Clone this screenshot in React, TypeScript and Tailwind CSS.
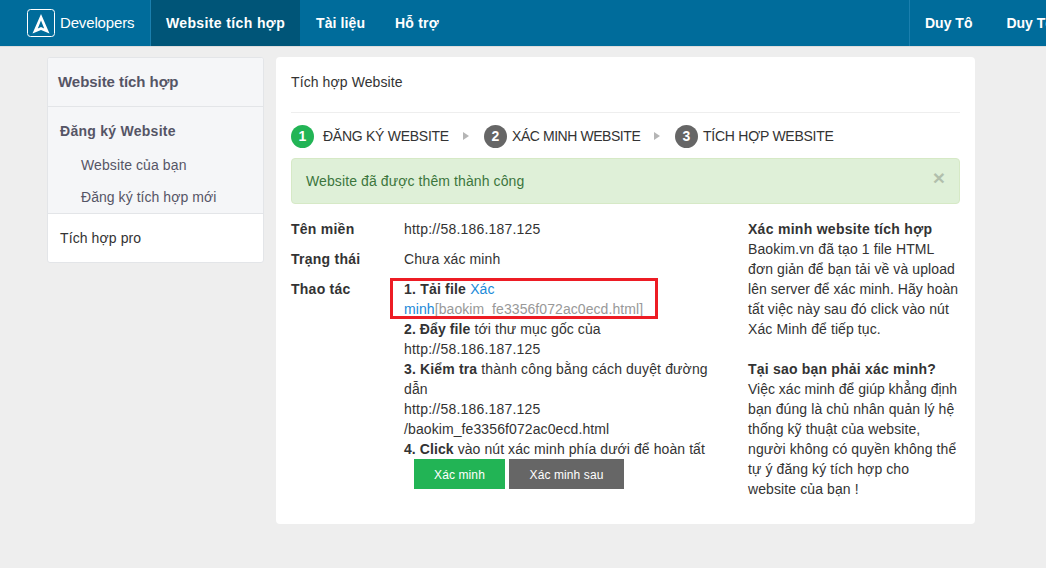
export default function App() {
  return (
    <div className="h-[568px] w-full overflow-hidden bg-[#eeeeee] font-['Liberation_Sans',Arial,sans-serif] text-[14px] leading-[20px] tracking-[0.1px] text-[#333333]">
      {/* Top nav */}
      <header className="flex h-[47px] overflow-hidden border-b border-[#dddddd] bg-[#006c9b] text-white">
        <div className="flex w-[909px] shrink-0">
          <div className="flex w-[151px] items-center border-r border-[#1a7fae] pl-[27px]">
            <svg width="28" height="28" viewBox="0 0 28 28" fill="none" aria-hidden="true">
              <rect x="0.5" y="0.5" width="27" height="27" rx="3" stroke="#fff" />
              <path d="M14 5 L22.5 24.5 L14 21 L5.5 24.5 Z M14 11.5 L10.8 19.5 L14 18 L17.2 19.5 Z" fill="#fff" fillRule="evenodd" />
            </svg>
            <span className="ml-[5px] text-[15px] tracking-[-0.15px]">Developers</span>
          </div>
          <a className="flex h-[46px] w-[149px] items-center justify-center bg-[#005578] font-bold tracking-[0.38px]">Website tích hợp</a>
          <a className="ml-[16px] flex h-[46px] items-center font-bold">Tài liệu</a>
          <a className="ml-[30px] flex h-[46px] items-center font-bold tracking-[0.2px]">Hỗ trợ</a>
        </div>
        <div className="flex shrink-0 border-l border-[#1a7fae]">
          <a className="ml-[15px] flex h-[46px] items-center font-bold tracking-normal whitespace-nowrap">Duy Tô</a>
          <a className="ml-[34px] flex h-[46px] items-center font-bold tracking-normal whitespace-nowrap">Duy Tô</a>
        </div>
      </header>

      <div className="ml-[47px] mt-[10px] flex items-start gap-[12px]">
        {/* Sidebar */}
        <aside className="w-[217px] overflow-hidden rounded-[3px] border border-[#e3e5e8] bg-white text-[#555566]">
          <div className="h-[49px] border-b border-[#e3e5e8] bg-[#f5f6f8] pl-[10px] pt-[14px] text-[15px] font-bold leading-[20px] tracking-[-0.05px]">Website tích hợp</div>
          <div className="h-[106px] bg-[#f5f6f8] pl-[12px] pt-[14px]">
            <div className="font-bold tracking-[0.27px]">Đăng ký Website</div>
            <div className="ml-[21px] mt-[14px]">Website của bạn</div>
            <div className="ml-[21px] mt-[12px] tracking-[0.05px]">Đăng ký tích hợp mới</div>
          </div>
          <div className="h-[49px] border-t border-[#e3e5e8] pl-[12px] pt-[14px] text-[#333333]">Tích hợp pro</div>
        </aside>

        {/* Main panel */}
        <main className="relative h-[467px] w-[699px] rounded-[4px] bg-white px-[15px]">
          <div className="h-[56px] border-b border-[#eeeeee] pt-[15px]">Tích hợp Website</div>

          <div className="mt-[12px] flex h-[22px] items-center">
            <span className="flex h-[23px] w-[23px] items-center justify-center rounded-full bg-[#22b455] font-bold text-white">1</span>
            <span className="ml-[9px] w-[126px] tracking-[-0.27px] whitespace-nowrap">ĐĂNG KÝ WEBSITE</span>
            <span className="ml-[14px] h-0 w-0 border-y-[4px] border-l-[6px] border-y-transparent border-l-[#b5b5b5]" />
            <span className="ml-[15px] flex h-[23px] w-[23px] items-center justify-center rounded-full bg-[#666666] font-bold text-white">2</span>
            <span className="ml-[5px] w-[128px] tracking-[-0.44px] whitespace-nowrap">XÁC MINH WEBSITE</span>
            <span className="ml-[14px] h-0 w-0 border-y-[4px] border-l-[6px] border-y-transparent border-l-[#b5b5b5]" />
            <span className="ml-[15px] flex h-[23px] w-[23px] items-center justify-center rounded-full bg-[#666666] font-bold text-white">3</span>
            <span className="ml-[5px] tracking-[-0.25px] whitespace-nowrap">TÍCH HỢP WEBSITE</span>
          </div>

          <div className="mt-[11px] flex h-[46px] items-start justify-between rounded-[4px] border border-[#d6e9c6] bg-[#dff0d8] pl-[14px] pr-[15px] pt-[12px] text-[#3c763d]">
            <span>Website đã được thêm thành công</span>
            <span className="mr-[-1px] mt-[-3px] text-[21px] font-bold leading-[20px] text-[#000000] opacity-20">×</span>
          </div>

          <div className="mt-[15px] flex">
            <div className="w-[113px] shrink-0 font-bold tracking-[0.25px]">
              <div className="h-[30px]">Tên miền</div>
              <div className="h-[30px]">Trạng thái</div>
              <div>Thao tác</div>
            </div>
            <div className="w-[312px] shrink-0">
              <div className="h-[30px] tracking-[0.2px]">http://58.186.187.125</div>
              <div className="h-[30px]">Chưa xác minh</div>
              <div className="w-[310px]">
                <div className="w-[240px] break-words">
                  <b className="tracking-[0.2px]">1. Tải file</b> <a className="text-[#1b8ad8]">Xác minh</a><span className="text-[#999999] tracking-[0.07px]">[baokim_fe3356f072ac0ecd.html]</span>
                </div>
                <div>
                  <b>2. Đẩy file</b> tới thư mục gốc của
                  <br />
                  <span className="tracking-[0.2px]">http://58.186.187.125</span>
                </div>
                <div className="tracking-[0.15px]">
                  <b>3. Kiểm tra</b> thành công bằng cách duyệt đường dẫn
                  <br />
                  <span className="tracking-[0.2px]">http://58.186.187.125</span>
                  <br />
                  <span className="tracking-[0.1px]">/baokim_fe3356f072ac0ecd.html</span>
                </div>
                <div className="tracking-[0.08px]">
                  <b>4. Click</b> vào nút xác minh phía dưới để hoàn tất
                </div>
                <div className="ml-[10px] flex gap-[4px] text-[12px] text-white">
                  <a className="flex h-[30px] w-[91px] items-center justify-center bg-[#22b455] pt-[1px]">Xác minh</a>
                  <a className="flex h-[30px] w-[115px] items-center justify-center bg-[#666666] pt-[1px]">Xác minh sau</a>
                </div>
              </div>
            </div>
            <div className="ml-[32px] w-[212px] shrink-0 whitespace-nowrap">
              <b className="tracking-[0.28px]">Xác minh website tích hợp</b>
              <p>
                Baokim.vn đã tạo 1 file HTML
                <br />
                đơn giản để bạn tải về và upload
                <br />
                <span className="tracking-[0.05px]">lên server để xác minh. Hãy hoàn</span>
                <br />
                tất việc này sau đó click vào nút
                <br />
                Xác Minh để tiếp tục.
              </p>
              <b className="mt-[20px] block tracking-[0.2px]">Tại sao bạn phải xác minh?</b>
              <p>
                <span className="tracking-normal">Việc xác minh để giúp khẳng định</span>
                <br />
                bạn đúng là chủ nhân quản lý hệ
                <br />
                thống kỹ thuật của website,
                <br />
                người không có quyền không thể
                <br />
                tự ý đăng ký tích hợp cho
                <br />
                website của bạn !
              </p>
            </div>
          </div>

          {/* Red annotation box */}
          <div className="absolute left-[114px] top-[221px] h-[41px] w-[268px] border-[3px] border-[#ed1c24]" />
        </main>
      </div>
    </div>
  );
}
